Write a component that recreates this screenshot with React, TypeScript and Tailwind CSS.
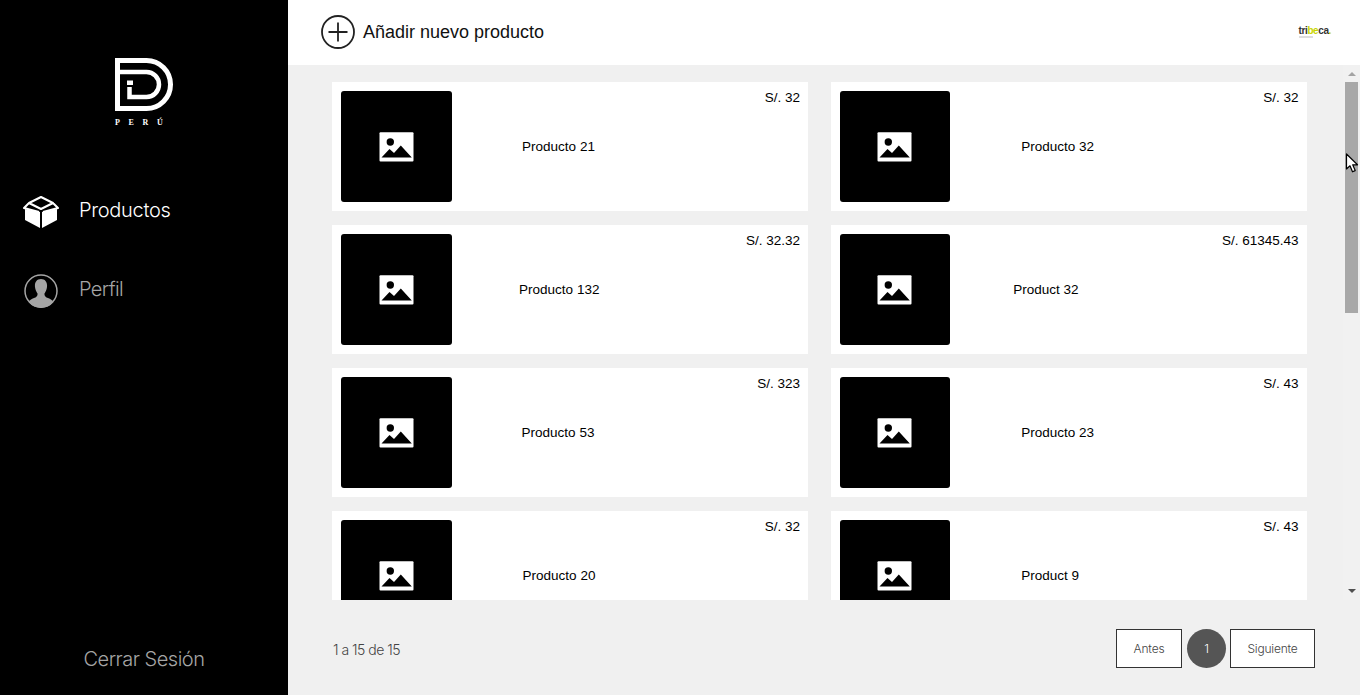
const products = [
  { name: "Producto 21", price: "S/. 32", offset: "ml-[70.5px]" },
  { name: "Producto 32", price: "S/. 32", offset: "ml-[71px]" },
  { name: "Producto 132", price: "S/. 32.32", offset: "ml-[67.5px]" },
  { name: "Product 32", price: "S/. 61345.43", offset: "ml-[63px]" },
  { name: "Producto 53", price: "S/. 323", offset: "ml-[70px]" },
  { name: "Producto 23", price: "S/. 43", offset: "ml-[71px]" },
  { name: "Producto 20", price: "S/. 32", offset: "ml-[71px]" },
  { name: "Product 9", price: "S/. 43", offset: "ml-[71px]" },
];

function Logo() {
  return (
    <svg width="70" height="56" viewBox="109 56 70 56" fill="none" className="block">
      <path d="M117.500 60.500H146.500A24 24 0 0 1 146.500 108.500H117.500Z" stroke="#fff" strokeWidth="5" />
      <path d="M120 72H146.500A12.500 12.500 0 0 1 146.500 97H129.500V87" stroke="#fff" strokeWidth="4.500" />
      <rect x="127" y="80.500" width="6" height="4.500" fill="#fff" />
    </svg>
  );
}

function BoxIcon() {
  return (
    <svg width="38" height="34" viewBox="22 195 38 34" className="block">
      <path d="M25 209V220L40 228V212Z M42 212V228L57 220V209Z" fill="#fff" />
      <path d="M41 197L53 203L41 209L29 203Z M29 203L24 208L39 212 M53 203L58 208L43 212" fill="none" stroke="#fff" strokeWidth="2" strokeLinejoin="round" />
    </svg>
  );
}

function PersonIcon() {
  return (
    <svg width="34" height="34" viewBox="24 274 34 34" className="block">
      <circle cx="41" cy="291" r="16" fill="none" stroke="#a5a5a5" strokeWidth="1.500" />
      <path d="M41 279C36.500 279 34.500 282.500 35 287C35.300 290 36.500 292 37.500 293.500C37.800 296 36.500 297 34 298C31.500 299 29.500 300 28.500 302A16 16 0 0 0 53.500 302C52.500 300 50.500 299 48 298C45.500 297 44.200 296 44.500 293.500C45.500 292 46.700 290 47 287C47.500 282.500 45.500 279 41 279Z" fill="#a5a5a5" />
    </svg>
  );
}

function ImageIcon() {
  return (
    <svg width="35" height="30" viewBox="379 131.500 35 30" className="block">
      <rect x="379.500" y="131.800" width="34" height="29.200" rx="1" fill="#fff" />
      <circle cx="390.300" cy="141.500" r="3.700" fill="#000" />
      <path d="M381.500 157L389.500 148.500L394 152.500L400.800 145L411.800 157Z" fill="#000" />
    </svg>
  );
}

function Card({ name, price, offset }: { name: string; price: string; offset: string }) {
  return (
    <div className="flex h-[129px] shrink-0 items-center bg-white pl-[9px] pr-2">
      <div className="flex h-[111px] w-[110.6px] shrink-0 items-center justify-center rounded-[3px] bg-black">
        <ImageIcon />
      </div>
      <span className={`${offset} text-[13.5px] leading-5 text-black`}>{name}</span>
      <span className="ml-auto mb-[98px] text-[13.5px] leading-5 text-black">{price}</span>
    </div>
  );
}

export default function App() {
  return (
    <div className="relative flex h-[695px] w-[1360px] overflow-hidden bg-[#f0f0f0] font-['Liberation_Sans',sans-serif]">
      <aside className="flex w-[288px] shrink-0 flex-col bg-black font-['Inter',sans-serif]">
        <div className="flex flex-col items-center pt-[56px]">
          <Logo />
          <div className="mt-[6px] flex w-[58px] font-['Liberation_Serif',serif] text-[8px] font-bold leading-[9px] tracking-[8.7px] text-white">
            PERÚ
          </div>
        </div>
        <nav className="mt-[67px] flex flex-col gap-[44px] pl-[22px]">
          <div className="flex h-[35px] items-center gap-[19px]">
            <BoxIcon />
            <span className="mb-[4px] text-xl font-light tracking-[-0.3px] text-white">Productos</span>
          </div>
          <div className="flex h-[35px] items-center gap-[21px] pl-[2px]">
            <PersonIcon />
            <span className="mb-[4px] text-xl font-light tracking-[-0.6px] text-[#a5a5a5]">Perfil</span>
          </div>
        </nav>
        <div className="mt-auto pb-[22px] text-center text-xl font-light tracking-[-0.5px] text-[#a5a5a5]">
          Cerrar Sesión
        </div>
      </aside>

      <main className="flex min-w-0 flex-1 flex-col">
        <header className="flex h-[65px] shrink-0 items-center justify-between bg-white pb-[2px] pl-[33px] pr-[29px]">
          <div className="flex items-center gap-2">
            <svg width="34" height="34" viewBox="0 0 34 34" fill="none" stroke="#222" className="block">
              <circle cx="17" cy="17" r="16" strokeWidth="1.800" />
              <path d="M17 7.500V26.500M7.500 17H26.500" strokeWidth="1.800" />
            </svg>
            <span className="text-lg text-[#111]">Añadir nuevo producto</span>
          </div>
          <div className="flex flex-col">
            <span className="text-[10px] font-bold leading-[9px] tracking-[-0.4px] text-[#333]">
              tri<span className="text-[#c9d400]">be</span>ca<span className="text-[#c9d400]">.</span>
            </span>
            <div className="mt-[1px] h-[2px] w-[14px] bg-[#ddd]" />
          </div>
        </header>

        <div className="flex h-[535px] shrink-0">
          <div className="flex min-w-0 flex-1 overflow-hidden pl-[44px] pt-[17px]">
            <div className="grid h-fit w-[975px] shrink-0 grid-cols-[476px_476px] gap-x-[22.6px] gap-y-[14px]">
              {products.map((p) => (
                <Card key={p.name + p.price} {...p} />
              ))}
            </div>
          </div>
          <div className="flex w-[17px] shrink-0 flex-col items-center bg-[#f1f1f1]">
            <div className="mt-[7px] h-0 w-0 border-x-4 border-b-4 border-x-transparent border-b-[#a3a3a3]" />
            <div className="mt-[6px] h-[231px] w-[13px] bg-[#a8a8a8]" />
            <div className="mt-auto mb-[7px] h-0 w-0 border-x-4 border-t-4 border-x-transparent border-t-[#505050]" />
          </div>
        </div>

        <footer className="flex min-h-0 flex-1 items-center justify-between pt-[2px] pl-[45px] pr-[45px] font-['Inter',sans-serif] font-light text-[#444]">
          <span className="mt-[2px] text-sm tracking-[-0.5px]">1 a 15 de 15</span>
          <div className="flex items-center text-xs tracking-[-0.2px]">
            <div className="flex h-[39px] w-[66px] items-center justify-center border border-[#333] bg-white">Antes</div>
            <div className="ml-[5px] flex h-[39px] w-[39px] items-center justify-center rounded-full bg-[#555] text-white">1</div>
            <div className="ml-[4px] flex h-[39px] w-[85px] items-center justify-center border border-[#333] bg-white">Siguiente</div>
          </div>
        </footer>
      </main>

      <svg width="14" height="21" viewBox="0 0 14 21" className="absolute left-[1345px] top-[153px] block">
        <path d="M1.500 1V16L5 12.800L7.500 18.800L10.200 17.600L7.700 11.800H12.500Z" fill="#fff" stroke="#000" strokeWidth="1.200" strokeLinejoin="round" />
      </svg>
    </div>
  );
}
